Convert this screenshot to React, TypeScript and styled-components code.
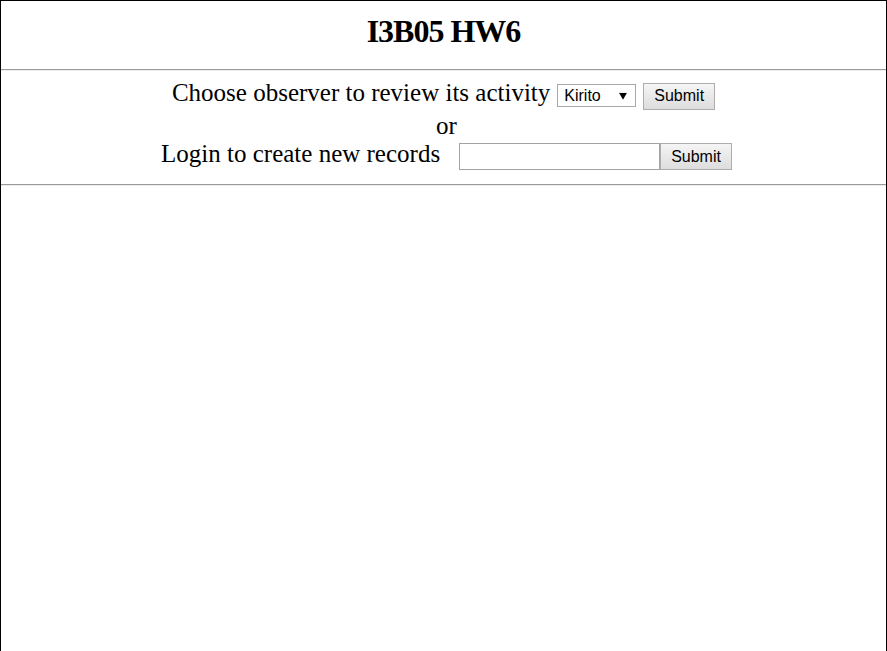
import React from "react"
import styled, { createGlobalStyle, css } from "styled-components"

const GlobalStyle = createGlobalStyle`
  html, body {
    margin: 0;
    padding: 0;
    background: #fff;
  }
  body {
    font-family: "Liberation Serif", "Times New Roman", serif;
    color: #000;
  }
`

const Page = styled.div`
  box-sizing: border-box;
  min-height: 100vh;
  border: 1px solid #000;
  border-bottom: none;
`

const Title = styled.h1`
  margin: 0;
  padding: 12px 0 20px;
  font-size: 32px;
  line-height: 36px;
  font-weight: 700;
  text-align: center;
  letter-spacing: -1px;
`

const Rule = styled.hr`
  margin: 0;
  height: 0;
  border: none;
  border-top: 1px solid #9a9a9a;
  border-bottom: 1px solid #eeeeee;
`

const Panel = styled.section`
  display: flex;
  flex-direction: column;
  padding: 9px 0 14px;
  font-size: 25px;
  line-height: 26px;
`

const Row = styled.div<{ $gap?: number; $top?: number; $shift?: number }>`
  display: flex;
  justify-content: center;
  align-items: baseline;
  gap: ${p => p.$gap ?? 7}px;
  margin-top: ${p => p.$top ?? 0}px;
  padding-left: ${p => p.$shift ?? 0}px;
`

const Group = styled.form`
  display: inline-flex;
  align-items: baseline;
  margin: 0;
`

const control = css`
  box-sizing: border-box;
  margin: 0;
  font-family: "Liberation Sans", Arial, sans-serif;
  font-size: 16px;
  color: #000;
`

const Button = styled.button`
  ${control};
  height: 27px;
  padding: 0 10px;
  border: 1px solid #adadad;
  border-radius: 0;
  background: linear-gradient(#f5f5f5, #dddddd);
  cursor: pointer;
`

const SelectWrap = styled.span`
  position: relative;
  display: inline-flex;
  align-items: baseline;
`

const Select = styled.select`
  ${control};
  appearance: none;
  width: 79px;
  height: 23px;
  padding: 0 20px 0 6px;
  border: 1px solid #a9a9a9;
  border-radius: 0;
  background: #fff;
`

const Arrow = styled.svg`
  position: absolute;
  right: 9px;
  top: 50%;
  transform: translateY(-45%);
  pointer-events: none;
`

const TextInput = styled.input`
  ${control};
  width: 201px;
  height: 27px;
  padding: 1px 2px;
  border: 1px solid #a3a3a3;
  border-radius: 0;
  background: #fff;
`

const App = () => {
  return (
    <>
      <GlobalStyle />
      <Page>
        <Title>I3B05 HW6</Title>
        <Rule />
        <Panel>
          <Row>
            <span>Choose observer to review its activity</span>
            <SelectWrap>
              <Select defaultValue="Kirito">
                <option>Kirito</option>
                <option>Asuna</option>
              </Select>
              <Arrow width="8" height="7" viewBox="0 0 8 7">
                <polygon points="0,0 8,0 4,7" fill="#000" />
              </Arrow>
            </SelectWrap>
            <Button type="button">Submit</Button>
          </Row>
          <Row $top={3} $shift={6}>
            <span>or</span>
          </Row>
          <Row $top={2} $gap={19} $shift={6}>
            <span>Login to create new records</span>
            <Group onSubmit={e => e.preventDefault()}>
              <TextInput type="text" />
              <Button type="submit">Submit</Button>
            </Group>
          </Row>
        </Panel>
        <Rule />
      </Page>
    </>
  )
}

export default App
